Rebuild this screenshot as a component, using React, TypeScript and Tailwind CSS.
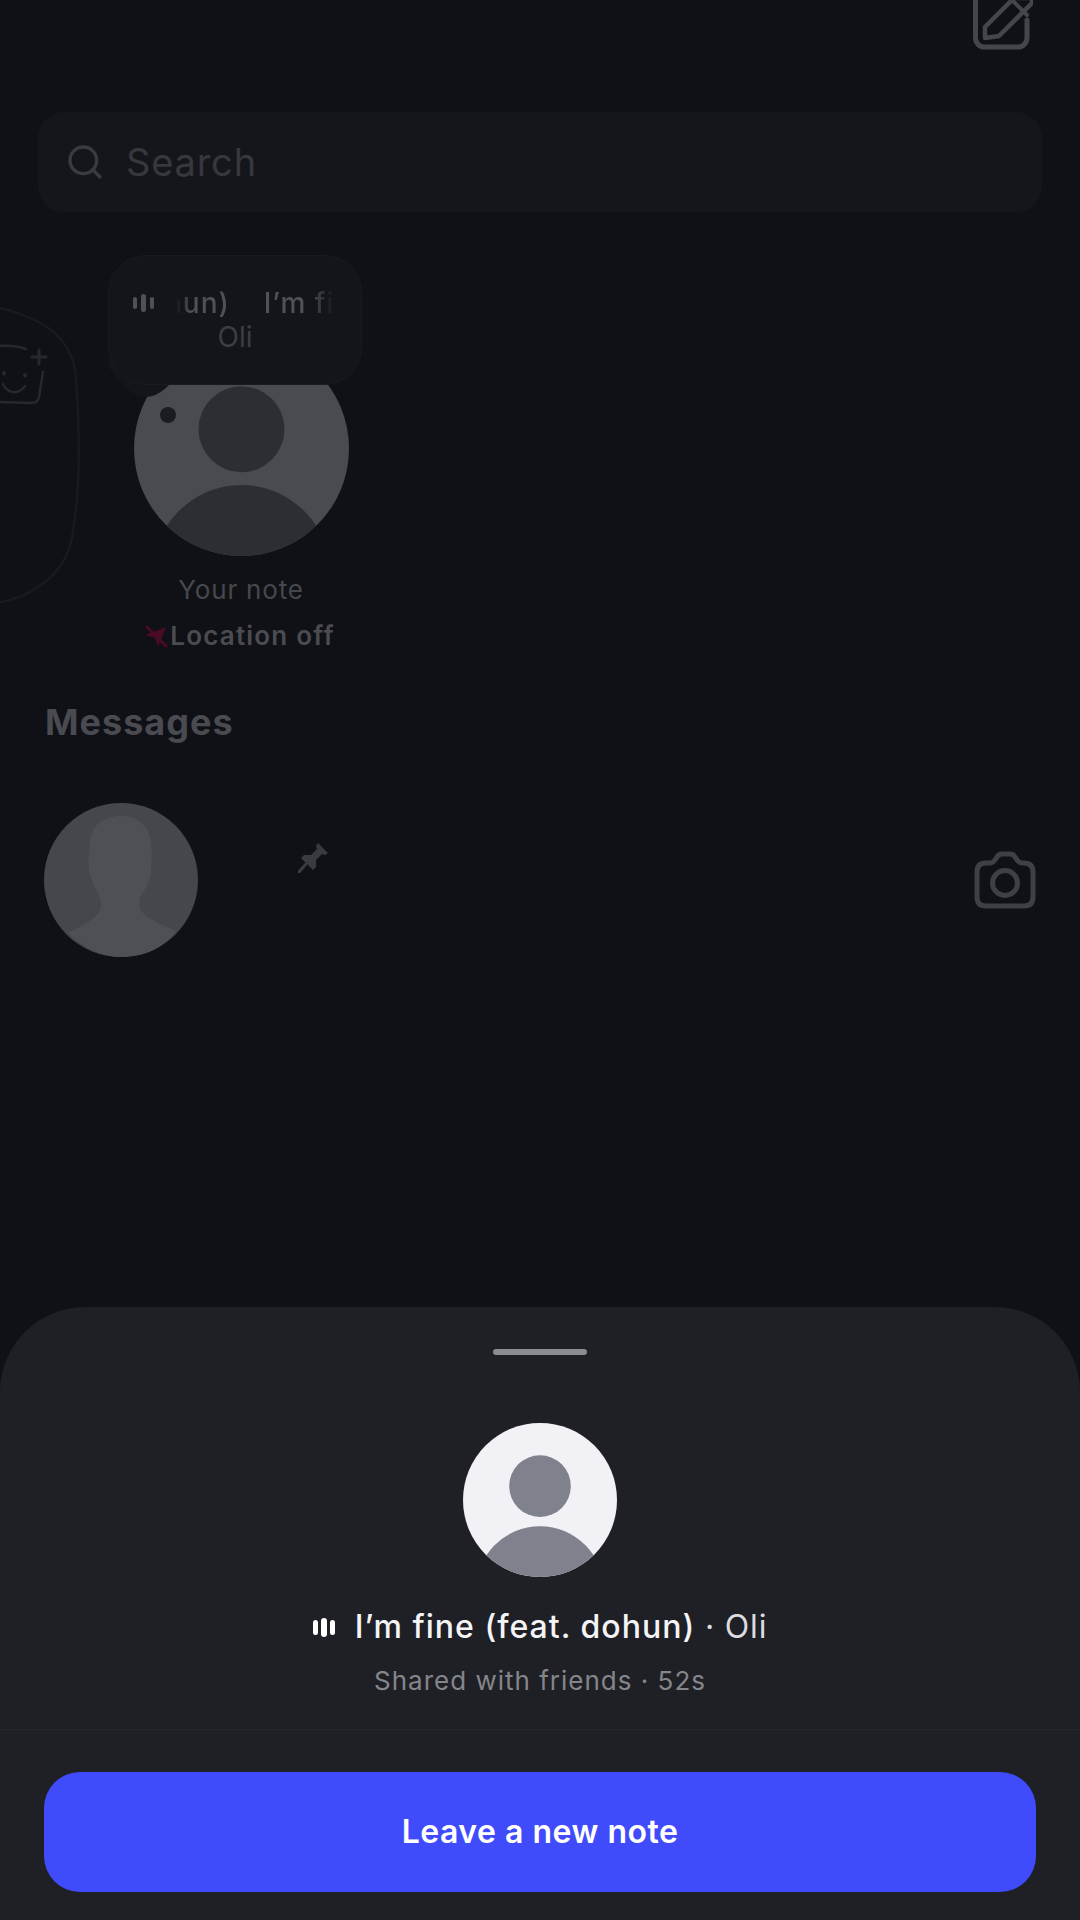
import { Search } from 'lucide-react';

function Avatar({ className, circle, figure }: { className: string; circle: string; figure: string }) {
  return (
    <svg viewBox="0 0 100 100" className={className}>
      <defs>
        <clipPath id="avatar-clip">
          <circle cx="50" cy="50" r="50" />
        </clipPath>
      </defs>
      <g clipPath="url(#avatar-clip)">
        <rect width="100" height="100" fill={circle} />
        <circle cx="50" cy="41" r="20" fill={figure} />
        <ellipse cx="50" cy="110" rx="42" ry="43" fill={figure} />
      </g>
    </svg>
  );
}

function ComposeIcon() {
  return (
    <svg viewBox="0 0 62 50" className="w-[62px] h-[50px] text-[#45464b]" fill="none" stroke="currentColor" strokeWidth="5" strokeLinecap="round" strokeLinejoin="round">
      <path d="M4.500 -6 V38 a9 9 0 0 0 9 9 H47 a9 9 0 0 0 9 -9 V20" />
      <path d="M14 27 L43 -2 L61 -2 L61 3 L28 36 L14 38 Z" strokeWidth="4.500" />
      <path d="M43 2 L56 15" strokeWidth="4" />
    </svg>
  );
}

function StickerOutline() {
  return (
    <svg viewBox="0 0 80 300" className="w-[80px] h-[300px]" fill="none" strokeLinecap="round" strokeLinejoin="round">
      <path d="M-4 2 C40 12 72 30 76 72 C80 130 80 190 72 232 C66 268 34 292 -4 298" stroke="#191a1f" strokeWidth="2.500" />
      <g stroke="#27282d" strokeWidth="2.500">
        <path d="M-2 41 C10 40 18 41 26 44" />
        <path d="M43 67 L39 92 C38 97 35 98 31 98 L-2 97" />
        <path d="M39 45 V59 M32 52 H46" strokeWidth="3" />
        <path d="M3 79 C8 89 18 90 25 81" />
        <path d="M4 68 v0.500 M25 70 v0.500" strokeWidth="4" />
      </g>
    </svg>
  );
}

function NoteBubble() {
  return (
    <div className="absolute left-[17px] top-0 w-[254px] h-[130px]">
      <svg viewBox="0 0 80 50" className="absolute left-0 top-[105px] w-[80px] h-[50px]">
        <path d="M0 4 C1 8 4 14 10 20 C20 28 24 36 36 37 C50 38 60 26 68 18 L72 0 L0 0 Z" fill="#14151a" />
      </svg>
      <div className="relative h-full rounded-[38px] bg-[#14151a] border border-[#1a1b20] flex flex-col items-center pt-[27px] overflow-hidden">
        <div className="flex items-center self-start pl-[24px]">
          <div className="flex items-center gap-[4px] w-[22px] shrink-0">
            <span className="w-[4px] h-[12px] rounded-full bg-[#505156]" />
            <span className="w-[5px] h-[18px] rounded-full bg-[#505156]" />
            <span className="w-[4px] h-[12px] rounded-full bg-[#505156]" />
          </div>
          <div className="ml-[15px] w-[165px] overflow-hidden whitespace-nowrap text-[28px] leading-[40px] font-medium tracking-[1px] text-[#505156] [mask-image:linear-gradient(to_right,transparent_6px,black_20px,black_140px,transparent_165px)]">
            <span className="inline-block -ml-[5px]">hun)&nbsp;&nbsp;&nbsp;&nbsp;I’m fine</span>
          </div>
        </div>
        <span className="text-[28px] leading-[30px] text-[#3d3e43] -mt-[1px]">Oli</span>
      </div>
    </div>
  );
}

function LocationOffIcon() {
  return (
    <svg viewBox="0 0 24 24" className="w-[24px] h-[24px]" fill="#4a0b25">
      <path d="M1 11 L22 3 L14 23 L11 14 Z" />
      <path d="M3 3 L22 22" stroke="#4a0b25" strokeWidth="3" strokeLinecap="round" />
    </svg>
  );
}

function Silhouette() {
  return (
    <svg viewBox="0 0 154 154" className="w-[154px] h-[154px] shrink-0">
      <circle cx="77" cy="77" r="77" fill="#46474c" />
      <path
        d="M77 13 C60 13 47 22 46 40 C45 50 44 58 45 66 C46 76 50 82 53 88 C57 95 58 102 56 108 C50 118 35 124 24 130 C40 146 60 154 77 154 C100 154 120 145 132 128 C118 122 104 116 97 108 C94 100 95 94 100 88 C105 80 108 72 107 62 C108 50 108 42 106 34 C102 20 92 13 77 13 Z"
        fill="#4f5055"
      />
    </svg>
  );
}

function PinIcon() {
  return (
    <svg viewBox="0 0 30 30" className="w-[30px] h-[30px] mb-[44px] ml-[100px]" fill="#3a3b40">
      <path d="M20 0 L30 10 L27 12 L24 11 L18 17 L18 24 L15 27 L3 15 L6 12 L13 12 L19 6 L18 3 Z" />
      <path d="M8 21 L1 29" stroke="#3a3b40" strokeWidth="3" strokeLinecap="round" />
    </svg>
  );
}

function CameraIcon() {
  return (
    <svg viewBox="0 0 62 58" className="w-[62px] h-[58px] ml-auto text-[#3f4045]" fill="none" stroke="currentColor" strokeWidth="5" strokeLinejoin="round">
      <path d="M12 12 H16 C20 12 21 9 23 6 C24 4 26 3 28 3 H36 C38 3 40 4 41 6 C43 9 44 12 48 12 H50 C56 12 59 15 59 21 V46 C59 52 56 55 50 55 H12 C6 55 3 52 3 46 V21 C3 15 6 12 12 12 Z" />
      <circle cx="31" cy="32" r="12.500" />
    </svg>
  );
}

export default function App() {
  return (
    <div className="w-[1080px] h-[1920px] flex flex-col overflow-hidden bg-[#0f1116] font-['Inter',sans-serif]">
      <div className="h-[1307px] shrink-0 overflow-hidden">
        <div className="flex justify-end h-[50px] pr-[47px]">
          <ComposeIcon />
        </div>

        <div className="mt-[62px] mx-[38px] h-[100px] rounded-[26px] bg-[#15161b] flex items-center pl-[27px]">
          <Search className="w-[40px] h-[40px] text-[#3a3b40]" strokeWidth={2} />
          <span className="ml-[21px] text-[38px] tracking-[0.8px] text-[#37383d]">Search</span>
        </div>

        <div className="mt-[43px] flex h-[412px]">
          <div className="mt-[50px] w-[91px]">
            <StickerOutline />
          </div>
          <div className="relative w-[300px] pt-[86px] flex flex-col items-center">
            <Avatar className="w-[215px] h-[215px]" circle="#4a4b50" figure="#2d2e33" />
            <span className="absolute left-[69px] top-[152px] w-[16px] h-[16px] rounded-full bg-[#1b1c21]" />
            <NoteBubble />
            <span className="mt-[18px] text-[26px] leading-[32px] tracking-[0.8px] text-[#47484d]">Your note</span>
            <div className="mt-[14px] flex items-center -ml-[3px]">
              <LocationOffIcon />
              <span className="ml-[2px] text-[26px] leading-[32px] font-semibold tracking-[1.2px] text-[#4b4c51]">Location off</span>
            </div>
          </div>
        </div>

        <h2 className="mt-[33px] ml-[45px] text-[36px] leading-[44px] font-bold tracking-[1px] text-[#4a4b50]">Messages</h2>

        <div className="mt-[59px] mx-[44px] flex items-center">
          <Silhouette />
          <PinIcon />
          <CameraIcon />
        </div>
      </div>

      <div className="flex-1 rounded-t-[85px] bg-[#1f2025] flex flex-col items-center">
        <div className="mt-[42px] w-[94px] h-[6px] rounded-full bg-[#8b8c91]" />
        <Avatar className="mt-[68px] w-[154px] h-[154px]" circle="#f2f1f6" figure="#7f818d" />
        <div className="mt-[25px] flex items-center h-[50px]">
          <div className="flex items-center gap-[3px] w-[42px]">
            <span className="w-[5px] h-[15px] rounded-full bg-white" />
            <span className="w-[6px] h-[19px] rounded-full bg-white" />
            <span className="w-[5px] h-[15px] rounded-full bg-white" />
          </div>
          <span className="text-[32px] font-medium text-[#f4f4f6] tracking-[1px]">I’m fine (feat. dohun)</span>
          <span className="text-[32px] text-[#dcdce0] tracking-[0.8px] whitespace-pre"> · Oli</span>
        </div>
        <span className="mt-[13px] text-[26px] leading-[32px] tracking-[1px] text-[#85868c]">Shared with friends · 52s</span>
        <div className="mt-[32px] w-full h-[1px] bg-[#26272c]" />
        <button className="mt-[42px] w-[992px] h-[120px] rounded-[36px] bg-[#404bfb] text-[32px] font-semibold tracking-[0.5px] text-white">
          Leave a new note
        </button>
      </div>
    </div>
  );
}
